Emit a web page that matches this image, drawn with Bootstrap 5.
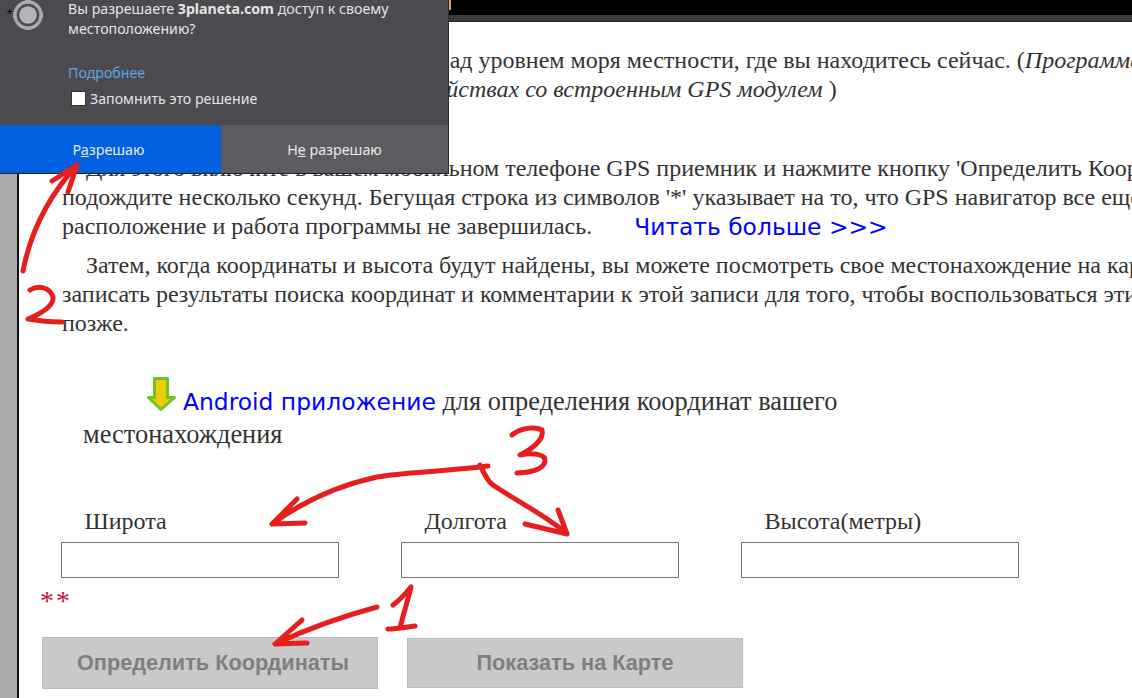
<!DOCTYPE html>
<html lang="ru">
<head>
  <meta charset="UTF-8">
  <title>Координаты</title>
  <link href="https://cdn.jsdelivr.net/npm/bootstrap@5.3.0/dist/css/bootstrap.min.css" rel="stylesheet">
  <style>
    html, body { height: 100%; overflow: hidden; background: #fff; }
    .shot { position: relative; height: 698px; width: 1132px; overflow: hidden; font-family: "Liberation Serif", serif; color: #333; font-size: 24px; }
    .side-strip { width: 19px; flex: none; background: #aaa; border-right: 2px solid #111; }
    .top-black { height: 21px; background: #000; border-bottom: 6px solid #3c3b40; box-shadow: 0 1px 0 #222; }
    .page-body { padding: 25px 0 0 43px; width: 1113px; }
    .txt { white-space: nowrap; line-height: 29px; margin: 0; }
    .txt-first { margin-bottom: 50px; }
    .txt-mid { margin-bottom: 10px; }
    .ind { padding-left: 24px; }
    .read-more { font-family: "DejaVu Sans", sans-serif; color: #00f; text-decoration: none; font-size: 23.4px; margin-left: 36px; line-height: 1; position: relative; top: 1px; }
    .app-line { margin: 38px 0 0 21px; font-size: 26.4px; line-height: 32px; white-space: nowrap; }
    .app-line a { font-family: "DejaVu Sans", sans-serif; color: #00f; text-decoration: none; font-size: 23.4px; }
    .app-indent { display: inline-block; width: 64px; }
    .down-ico { display: inline-block; width: 30px; height: 36px; vertical-align: -2px; margin-right: 6px; }
    .coord-grid { display: grid; grid-template-columns: repeat(3, 278px); column-gap: 62px; margin: 59px 0 0 -1px; }
    .coord-lbl { padding-left: 23.5px; line-height: 24px; margin-bottom: 9px; }
    .coord-input { width: 278px; height: 36px; border: 1px solid #777; background: #fff; display: block; }
    .stars { color: #c8123c; font-size: 28px; line-height: 24px; margin: 11px 0 0 -22px; letter-spacing: 2px; }
    .action-row { gap: 29px; margin: 24px 0 0 -20px; }
    .act-btn { width: 336px; height: 50px; background: #c9c9c9; border: 1px solid #bbb; border-radius: 0; color: #7f7f7f; font: bold 21.7px "Liberation Sans", sans-serif; padding: 0; }
    .act-main { height: 52px; padding-left: 6px; }
    .perm-pop { position: absolute; left: 0; top: 0; width: 449px; height: 174px; background: #4b4a4f; color: #e4e4e6; font: 14.2px "Noto Sans", sans-serif; border-bottom: 1px solid #222; border-right: 1px solid #2a2a2d; }
    .perm-ico { position: absolute; left: 8px; top: -5px; }
    .perm-dot { position: absolute; left: 7px; top: 8px; font: bold 9px/1 "Liberation Sans", sans-serif; color: #000; }
    .perm-text { position: absolute; left: 68px; top: -1px; line-height: 20px; width: 370px; }
    .perm-more { position: absolute; left: 68px; top: 63px; color: #5ea3e0; text-decoration: none; }
    .perm-check { position: absolute; left: 71px; top: 89px; gap: 4px; }
    .perm-box { width: 15px; height: 15px; background: #fff; border: 1px solid #333; }
    .perm-btns { position: absolute; left: 0; top: 125px; width: 448px; height: 48px; }
    .perm-yes, .perm-no { border: 0; border-radius: 0; color: #e8e8ea; font: 14.3px "Noto Sans", sans-serif; padding: 0; }
    .perm-yes { width: 221px; background: #0061e0; padding-right: 4px; }
    .perm-no { width: 227px; background: #5c5b60; }
    .tab-mark { position: absolute; left: 449px; top: 0; width: 2px; height: 10px; background: #e0a070; }
    .ink { position: absolute; left: 0; top: 0; pointer-events: none; }
    .ink path { fill: none; stroke: #e61e1e; stroke-width: 5; stroke-linecap: round; stroke-linejoin: round; }
  </style>
</head>
<body>
  <div class="shot d-flex">
    <div class="side-strip"></div>
    <div class="flex-grow-1">
      <div class="top-black"></div>
      <div class="page-body">
        <!-- #текст -->
        <p class="txt txt-first ind">Определите координаты и высоту над уровнем моря местности, где вы находитесь сейчас. (<i>Программа работает</i><br>
          <i>только на любых мобильных устройствах со встроенным GPS модулем </i>)</p>
        <p class="txt txt-mid"><span class="ind">Для этого включите в вашем мобильном телефоне GPS приемник и нажмите кнопку 'Определить Координаты'</span><br>
          подождите несколько секунд. Бегущая строка из символов '*' указывает на то, что GPS навигатор все еще определяет<br>
          расположение и работа программы не завершилась. <a class="read-more" href="#">Читать больше &gt;&gt;&gt;</a></p>
        <p class="txt"><span class="ind">Затем, когда координаты и высота будут найдены, вы можете посмотреть свое местонахождение на карте и</span><br>
          записать результаты поиска координат и комментарии к этой записи для того, чтобы воспользоваться этими данными<br>
          позже.</p>

        <p class="app-line">
          <span class="app-indent"></span><svg class="down-ico" viewBox="0 0 30 36"><path d="M7.5 2.5h13v19h7L14 33.5 1.5 21.5h6z" fill="#eccc10" stroke="#6cc41c" stroke-width="3" stroke-linejoin="round"/></svg><a href="#">Android приложение</a> для определения координат вашего<br>местонахождения
        </p>

        <!-- #координаты -->
        <div class="coord-grid">
          <div><div class="coord-lbl">Широта</div><input class="coord-input" type="text"></div>
          <div><div class="coord-lbl">Долгота</div><input class="coord-input" type="text"></div>
          <div><div class="coord-lbl">Высота(метры)</div><input class="coord-input" type="text"></div>
        </div>
        <div class="stars">**</div>
        <div class="d-flex align-items-center action-row">
          <button class="btn act-btn act-main" type="button">Определить Координаты</button>
          <button class="btn act-btn" type="button">Показать на Карте</button>
        </div>
      </div>
    </div>

    <!-- #окно запроса -->
    <div class="perm-pop">
      <svg class="perm-ico" width="40" height="40" viewBox="0 0 40 40">
        <circle cx="20" cy="20" r="13" fill="none" stroke="#a9a9ab" stroke-width="3.4"/>
        <circle cx="20" cy="20" r="8.8" fill="#b4b4b6"/>
        <path d="M17 5h6l-1 3h-4zM17 35h6l-1-3h-4zM5 17v6l3-1v-4zM35 17v6l-3-1v-4z" fill="#a9a9ab"/>
      </svg>
      <span class="perm-dot">+</span>
      <div class="perm-text">Вы разрешаете <b>3planeta.com</b> доступ к своему<br>местоположению?</div>
      <a class="perm-more" href="#">Подробнее</a>
      <div class="perm-check d-flex align-items-center"><span class="perm-box"></span><span>Запомнить это решение</span></div>
      <div class="perm-btns d-flex">
        <button class="btn perm-yes" type="button">Р<u>а</u>зрешаю</button>
        <button class="btn perm-no" type="button">Н<u>е</u> разрешаю</button>
      </div>
    </div>
    <div class="tab-mark"></div>

    <!-- #красные пометки -->
    <svg class="ink" width="1132" height="698" viewBox="0 0 1132 698">
      <path d="M23 271C30 235 45 200 77 165M52 181L77 165L68 192"/>
      <path d="M30 290C38 285 50 287 53 297C54 306 40 314 28 319C40 321 52 322 62 322"/>
      <path d="M488 466C440 472 405 472 377 477C340 485 305 500 272 524M297 499L272 524L305 523"/>
      <path d="M480 465C485 475 488 482 493 485C515 500 550 518 567 534M558 510L567 534L525 524"/>
      <path d="M512 435C520 428 535 426 542 430C545 440 530 450 520 455C535 452 546 455 545 461C544 470 528 473 517 473"/>
      <path d="M377 607C340 617 305 630 275 644M302 620L275 644L307 643"/>
      <path d="M393 605C400 600 406 593 411 587C408 600 403 615 400 628M388 629C398 629 406 627 415 626"/>
    </svg>
  </div>

  <script src="https://cdn.jsdelivr.net/npm/bootstrap@5.3.0/dist/js/bootstrap.bundle.min.js"></script>
</body>
</html>
